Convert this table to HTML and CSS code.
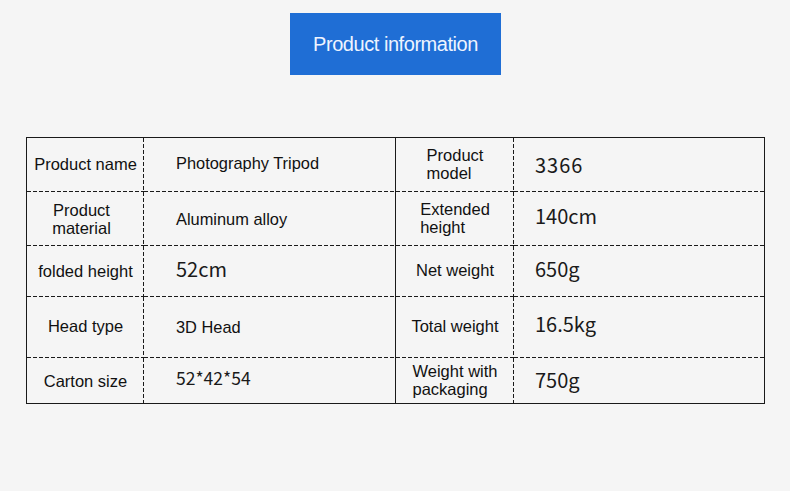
FILE: index.html
```html
<!DOCTYPE html>
<html lang="en">
<head>
<meta charset="utf-8">
<title>Product information</title>
<link rel="stylesheet" href="styles.css">
</head>
<body>
<div class="page">
  <div class="header">
    <div class="title">Product information</div>
  </div>
  <div class="table">
    <div class="cell c1 rb"><span class="label lift">Product name</span></div>
    <div class="cell c2 rb"><span class="text lift">Photography Tripod</span></div>
    <div class="cell c3 rb"><span class="label left lift1">Product<br>model</span></div>
    <div class="cell c4 rb"><span class="num wide">3366</span></div>

    <div class="cell c1 rb"><span class="label shift">Product<br>material</span></div>
    <div class="cell c2 rb"><span class="text">Aluminum alloy</span></div>
    <div class="cell c3 rb"><span class="label left lift1">Extended<br>height</span></div>
    <div class="cell c4 rb"><span class="num up">140cm</span></div>

    <div class="cell c1 rb"><span class="label lift1">folded height</span></div>
    <div class="cell c2 rb"><span class="num up">52cm</span></div>
    <div class="cell c3 rb"><span class="label lift">Net weight</span></div>
    <div class="cell c4 rb"><span class="num up">650g</span></div>

    <div class="cell c1 rb"><span class="label lift">Head type</span></div>
    <div class="cell c2 rb"><span class="text">3D Head</span></div>
    <div class="cell c3 rb"><span class="label lift">Total weight</span></div>
    <div class="cell c4 rb"><span class="num up2">16.5kg</span></div>

    <div class="cell c1"><span class="label">Carton size</span></div>
    <div class="cell c2"><span class="num small">52*42*54</span></div>
    <div class="cell c3"><span class="label left lift1">Weight with<br>packaging</span></div>
    <div class="cell c4"><span class="num up1">750g</span></div>
  </div>
</div>
</body>
</html>
```

FILE: styles.css
```css
html, body {
  margin: 0;
  padding: 0;
  background: #f5f5f5;
}

.page {
  width: 790px;
  height: 491px;
  padding-top: 13px;
  box-sizing: border-box;
  display: flex;
  flex-direction: column;
  font-family: "Liberation Sans", Arial, sans-serif;
  color: #111;
}

.header {
  display: flex;
  padding-left: 290px;
}

.title {
  width: 211px;
  height: 62px;
  background: #1f6ed5;
  color: #eef4ff;
  font-size: 20px;
  letter-spacing: -0.45px;
  display: flex;
  align-items: center;
  justify-content: center;
  padding-top: 1px;
  box-sizing: border-box;
}

.table {
  margin-top: 62px;
  margin-left: 26px;
  width: 739px;
  border: 1px solid #1a1a1a;
  box-sizing: border-box;
  display: grid;
  grid-template-columns: 117px 252px 118px 250px;
  grid-template-rows: 54px 54px 51px 61px 45px;
}

.cell {
  display: flex;
  align-items: center;
  box-sizing: border-box;
  background-repeat: no-repeat;
}

/* dashed right line for c1, c3; solid for c2 */
.c1,
.c3 {
  justify-content: center;
  background-image: linear-gradient(to bottom, #1a1a1a 4px, transparent 4px);
  background-size: 1px 6px;
  background-position: right top;
  background-repeat: repeat-y;
}
.c2 {
  padding-left: 32px;
  border-right: 1px solid #1a1a1a;
}
.c4 {
  padding-left: 21px;
}

/* dashed bottom line */
.rb {
  position: relative;
}
.rb::after {
  content: "";
  position: absolute;
  left: 0;
  right: 0;
  bottom: 0;
  height: 1px;
  background-image: linear-gradient(to right, #1a1a1a 4px, transparent 4px);
  background-size: 6px 1px;
  background-repeat: repeat-x;
}
.c2.rb::after {
  right: -1px;
}

.label {
  font-size: 16.5px;
  line-height: 18px;
  text-align: center;
}
.label.left {
  text-align: left;
}
.label.shift {
  margin-right: 8px;
}

.lift {
  margin-top: -3px;
}
.lift1 {
  margin-top: -2px;
}

.text {
  font-size: 16.4px;
}

.num {
  font-family: "Noto Sans CJK SC", "DejaVu Sans", sans-serif;
  font-size: 20px;
  color: #1a1a1a;
  line-height: 24px;
}
.num.wide {
  letter-spacing: 1px;
}
.num.up {
  margin-top: -6px;
}
.num.up2 {
  margin-top: -7px;
}
.num.up1 {
  margin-top: -2px;
}
.num.small {
  font-size: 17.5px;
  margin-top: -6px;
}
```
